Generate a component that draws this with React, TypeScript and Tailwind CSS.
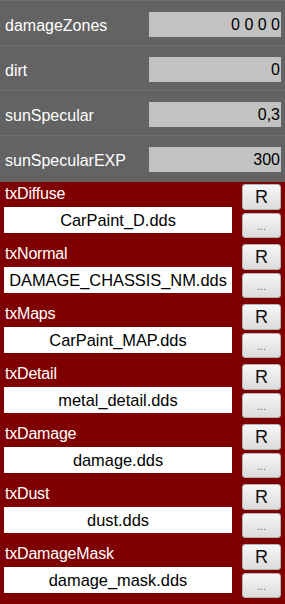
import React from "react";

const props = [
  { label: "damageZones", value: "0 0 0 0" },
  { label: "dirt", value: "0" },
  { label: "sunSpecular", value: "0,3" },
  { label: "sunSpecularEXP", value: "300" },
];

const textures = [
  { label: "txDiffuse", value: "CarPaint_D.dds" },
  { label: "txNormal", value: "DAMAGE_CHASSIS_NM.dds" },
  { label: "txMaps", value: "CarPaint_MAP.dds" },
  { label: "txDetail", value: "metal_detail.dds" },
  { label: "txDamage", value: "damage.dds" },
  { label: "txDust", value: "dust.dds" },
  { label: "txDamageMask", value: "damage_mask.dds" },
];

export default function App() {
  return (
    <div
      className="w-[285px] h-[604px] overflow-hidden bg-[#7f0000]"
      style={{ fontFamily: '"Liberation Sans", Arial, sans-serif' }}
    >
      <div className="bg-[#636363] h-[182px] flex flex-col">
        {props.map((p) => (
          <div
            key={p.label}
            className="h-[45px] flex items-start border-t border-[#6f6f6f] pl-[5px] pr-[4px]"
          >
            <div className="flex-1 text-white text-[16px] leading-[20px] mt-[15px]">
              {p.label}
            </div>
            <div className="w-[132px] h-[25px] mt-[11px] bg-[#c2c2c2] text-black text-[16px] leading-[25px] text-right pr-[1px]">
              {p.value}
            </div>
          </div>
        ))}
      </div>
      <div className="flex flex-col">
        {textures.map((t) => (
          <div key={t.label} className="h-[60px] flex pl-[4px] pr-[4px]">
            <div className="w-[228px] flex flex-col">
              <div className="h-[25px] text-white text-[16px] leading-[20px] pt-[2px] pl-[1px] tracking-[-0.2px]">
                {t.label}
              </div>
              <div className="h-[26px] bg-white text-black text-[16.4px] leading-[26px] text-center whitespace-nowrap overflow-hidden">
                {t.value}
              </div>
            </div>
            <div className="ml-[10px] w-[39px] flex flex-col">
              <div className="mt-[2px] h-[26px] rounded-[3px] border border-[#b5b5b5] bg-gradient-to-b from-[#f6f6f6] to-[#dcdcdc] flex items-center justify-center text-[18px] text-[#111] leading-none">
                R
              </div>
              <div className="mt-[3px] h-[25px] rounded-[3px] border border-[#b5b5b5] bg-gradient-to-b from-[#f6f6f6] to-[#dcdcdc] flex items-end justify-center text-[10px] text-[#666] leading-none pb-[5px]">
                ...
              </div>
            </div>
          </div>
        ))}
      </div>
    </div>
  );
}
